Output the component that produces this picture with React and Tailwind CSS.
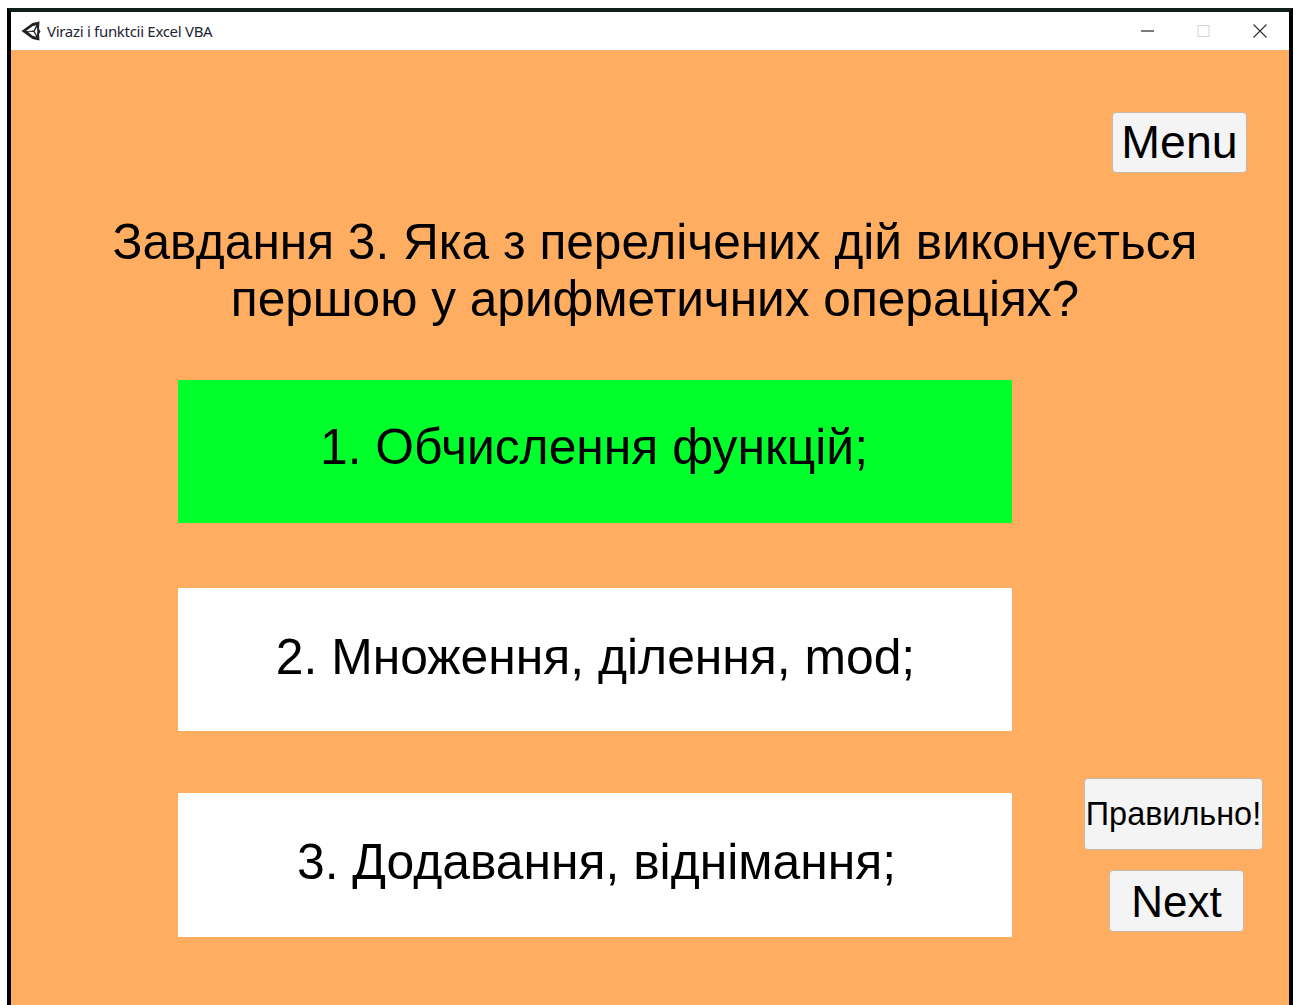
import React from 'react';

const font = "font-['Liberation_Sans',Arial,sans-serif]";

function UnityLogo() {
  return (
    <svg width="20" height="20" viewBox="0 0 20 20" className="shrink-0">
      <path d="M0.5 10 L11.5 2 L18.5 0.5 L18 8 L19.5 10.5 L18 13 L18.5 19.5 L11.5 18 Z" fill="#222" />
      <path d="M5 10 L11.5 5.2 L15.3 4.2 L12.6 9.5 L7 10 Z M7 10.8 L12.6 11 L15.3 15.8 L11.5 14.8 Z M13.7 10.2 L16 6 L16.3 10.2 L16 14.4 Z" fill="#fff" />
    </svg>
  );
}

function TitleBar() {
  return (
    <div className="h-[38px] bg-white flex items-center justify-between">
      <div className="flex items-center pl-[10px] gap-[6px]">
        <UnityLogo />
        <span className="font-['Noto_Sans',sans-serif] text-[15px] tracking-[-0.3px] text-[#1c2433]">Virazi i funktcii Excel VBA</span>
      </div>
      <div className="flex items-center">
        <svg width="56" height="16" viewBox="0 0 56 16"><path d="M21 8h13" stroke="#333" strokeWidth="1.3" /></svg>
        <svg width="56" height="16" viewBox="0 0 56 16"><rect x="22" y="2.5" width="11" height="11" fill="none" stroke="#d4d4d4" strokeWidth="1" /></svg>
        <svg width="57" height="16" viewBox="0 0 57 16"><path d="M21.5 1.5l13 13M34.5 1.5l-13 13" stroke="#333" strokeWidth="1.2" /></svg>
      </div>
    </div>
  );
}

function Answer({ text, correct, className }) {
  return (
    <div className={`w-[834px] flex items-center justify-center text-[49.8px] text-black ${correct ? 'bg-[#00ff2b]' : 'bg-white'} ${className || ''}`}>
      {text}
    </div>
  );
}

function UnityButton({ children, className }) {
  return (
    <button
      type="button"
      className={`flex items-center justify-center bg-[#f4f4f4] border border-[#c9b8a6] rounded-[4px] text-black ${className}`}
    >
      {children}
    </button>
  );
}

export default function App() {
  return (
    <div className={`w-[1296px] h-[1005px] overflow-hidden bg-white pt-[8px] pl-[7px] pr-[3px] ${font}`}>
      <div className="h-[997px] border-x-4 border-t-4 border-x-black border-t-[#0f1f1c]">
        <TitleBar />
        <div className="h-[955px] bg-[#ffad60] flex flex-col">
          {/* top right menu button */}
          <div className="flex justify-end pt-[62px] pr-[42px]">
            <UnityButton className="w-[135px] h-[61px] text-[46.5px]">Menu</UnityButton>
          </div>
          {/* question */}
          <div className="mt-[41px] pl-[10px] text-center text-[49.6px] leading-[57px] text-black whitespace-nowrap">
            <div>Завдання 3. Яка з перелічених дій виконується</div>
            <div>першою у арифметичних операціях?</div>
          </div>
          {/* answers and the two lower buttons */}
          <div className="mt-[52px] flex">
            <div className="ml-[167px] flex flex-col">
              <Answer text="1. Обчислення функцій;" correct className="h-[143px] pb-[9px] pr-[2px]" />
              <Answer text="2. Множення, ділення, mod;" className="h-[143px] mt-[65px] pb-[5px] pl-[1px]" />
              <Answer text="3. Додавання, віднімання;" className="h-[144px] mt-[62px] pb-[6px] pl-[3px]" />
            </div>
            <div className="ml-[72px] pt-[398px] flex flex-col items-start">
              <UnityButton className="w-[179px] h-[72px] text-[32.4px] whitespace-nowrap">Правильно!</UnityButton>
              <UnityButton className="ml-[25px] mt-[20px] w-[135px] h-[62px] pt-[2px] text-[44px]">Next</UnityButton>
            </div>
          </div>
        </div>
      </div>
    </div>
  );
}
